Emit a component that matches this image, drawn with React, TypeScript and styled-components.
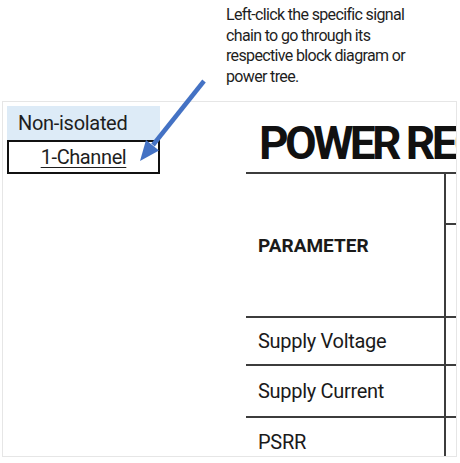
import React from "react";
import styled, { createGlobalStyle } from "styled-components";

const Global = createGlobalStyle`
  html, body { margin: 0; padding: 0; background: #ffffff; }
  body { font-family: Roboto, "Liberation Sans", sans-serif; color: #1e1e1e; }
`;

const Page = styled.div`
  position: relative;
  width: 460px;
  height: 463px;
  overflow: hidden;
  background: #ffffff;
`;

const Note = styled.div`
  height: 101px;
  box-sizing: border-box;
  padding: 5px 0 0 226px;
  font-size: 16px;
  line-height: 20.7px;
  letter-spacing: -0.65px;
  color: #1e1e1e;
`;

const Panel = styled.div`
  margin-left: 2px;
  width: 455px;
  height: 356px;
  box-sizing: border-box;
  border: 1px solid #e6e6e6;
  overflow: hidden;
  display: flex;
  align-items: flex-start;
`;

const LeftCol = styled.div`
  flex: 0 0 153px;
  margin: 4px 0 0 4px;
  display: flex;
  flex-direction: column;
`;

const GroupCell = styled.div`
  height: 34px;
  box-sizing: border-box;
  background: #ddebf7;
  padding-left: 11px;
  font-size: 20px;
  line-height: 34px;
  letter-spacing: -0.3px;
`;

const LinkCell = styled.div`
  height: 34px;
  box-sizing: border-box;
  border: 2px solid #111;
  text-align: center;
  font-size: 20px;
  line-height: 31px;
  letter-spacing: -0.4px;
`;

const LinkText = styled.span`
  text-decoration: underline;
  text-decoration-thickness: 1px;
  text-underline-offset: 3px;
`;

const RightCol = styled.div`
  flex: 0 0 260px;
  margin-left: 86px;
  display: flex;
  flex-direction: column;
`;

const Title = styled.div`
  height: 70px;
  box-sizing: border-box;
  padding: 18px 0 0 13px;
  font-size: 46px;
  line-height: 46px;
  font-weight: 700;
  letter-spacing: -3.6px;
  white-space: nowrap;
  overflow: hidden;
  color: #111;
`;

const Row = styled.div<{ $h: number }>`
  display: grid;
  grid-template-columns: 198px 1fr;
  box-sizing: border-box;
  border-top: 2px solid #3c3c3c;
  height: ${(p) => p.$h}px;
`;

const LabelCell = styled.div<{ $bold?: boolean }>`
  display: flex;
  align-items: center;
  padding-left: 12px;
  font-size: ${(p) => (p.$bold ? 19 : 20)}px;
  font-weight: ${(p) => (p.$bold ? 700 : 400)};
  letter-spacing: ${(p) => (p.$bold ? "0px" : "-0.3px")};
  color: #1a1a1a;
  white-space: nowrap;
`;

const ValueCell = styled.div`
  border-left: 2px solid #3c3c3c;
  display: flex;
  flex-direction: column;
`;

const SubHead = styled.div`
  height: 49px;
  border-bottom: 2px solid #3c3c3c;
`;

const Overlay = styled.svg`
  position: absolute;
  left: 0;
  top: 0;
  pointer-events: none;
`;

const rows = [
  { label: "Supply Voltage", h: 48 },
  { label: "Supply Current", h: 52 },
  { label: "PSRR", h: 50 },
];

export default function App() {
  return (
    <Page>
      <Global />
      <Note>
        Left-click the specific signal
        <br />
        chain to go through its
        <br />
        respective block diagram or
        <br />
        power tree.
      </Note>
      <Panel>
        <LeftCol>
          <GroupCell>Non-isolated</GroupCell>
          <LinkCell>
            <LinkText>1-Channel</LinkText>
          </LinkCell>
        </LeftCol>
        <RightCol>
          <Title>POWER REQUIREMENTS</Title>
          <Row $h={144}>
            <LabelCell $bold>PARAMETER</LabelCell>
            <ValueCell>
              <SubHead />
            </ValueCell>
          </Row>
          {rows.map((r) => (
            <Row key={r.label} $h={r.h}>
              <LabelCell>{r.label}</LabelCell>
              <ValueCell />
            </Row>
          ))}
        </RightCol>
      </Panel>
      <Overlay width={460} height={463} viewBox="0 0 460 463">
        <line
          x1={204}
          y1={81}
          x2={153}
          y2={145}
          stroke="#4472c4"
          strokeWidth={4.5}
          strokeLinecap="butt"
        />
        <polygon points="140,161 159,150.5 146,140" fill="#4472c4" />
      </Overlay>
    </Page>
  );
}
